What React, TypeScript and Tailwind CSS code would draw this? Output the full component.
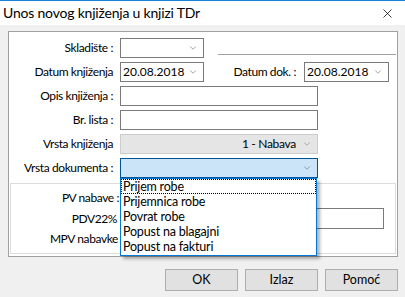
import { ChevronDown, X } from "lucide-react";

const font = "font-['Lato','Segoe_UI',sans-serif]";

const docTypes = [
  "Prijem robe",
  "Prijemnica robe",
  "Povrat robe",
  "Popust na blagajni",
  "Popust na fakturi",
];

function Label({ children }: { children: React.ReactNode }) {
  return (
    <span className="w-[104px] shrink-0 text-right text-[12px] tracking-[-0.4px] text-[#000]">
      {children}
    </span>
  );
}

function Combo({
  value,
  className = "",
}: {
  value?: string;
  className?: string;
}) {
  return (
    <div
      className={`flex h-[20px] items-center justify-between border border-[#7a7a7a] bg-white pl-[2px] pr-[5px] text-[12px] ${className}`}
    >
      <span>{value}</span>
      <ChevronDown size={10} strokeWidth={1.3} className="text-[#555]" />
    </div>
  );
}

function Input({ className = "" }: { className?: string }) {
  return (
    <div className={`h-[20px] border border-[#7a7a7a] bg-white ${className}`} />
  );
}

export default function App() {
  return (
    <div
      className={`${font} flex h-[297px] w-[405px] flex-col overflow-hidden border-t border-[#1883d7] bg-[#f0f0f0] text-black`}
    >
      {/* title bar */}
      <div className="flex h-[24px] shrink-0 items-center justify-between bg-white pl-[3px] pr-[10px]">
        <span className="text-[14px] leading-none tracking-[-0.2px]">
          Unos novog knjiženja u knjizi TDr
        </span>
        <X size={15} strokeWidth={1.2} />
      </div>

      <div className="px-[8px] pt-[6px]">
        <div className="relative flex h-[226px] w-[390px] flex-col border border-[#a0a0a0] bg-white pt-[6px]">
          <div className="flex flex-col gap-[4px]">
            <div className="flex items-center gap-[7px]">
              <Label>Skladište :</Label>
              <Combo className="w-[84px]" />
              <div className="ml-[7px] h-px w-[178px] translate-y-[6px] bg-[#a0a0a0]" />
            </div>
            <div className="flex items-center gap-[7px]">
              <Label>Datum knjiženja</Label>
              <Combo value="20.08.2018" className="w-[84px]" />
              <span className="ml-auto text-[12px] tracking-[-0.4px]">Datum dok. :</span>
              <Combo value="20.08.2018" className="mr-[8px] ml-[1px] w-[85px]" />
            </div>
            <div className="flex items-center gap-[7px]">
              <Label>Opis knjiženja :</Label>
              <Input className="w-[198px]" />
            </div>
            <div className="flex items-center gap-[7px]">
              <Label>Br. lista :</Label>
              <Input className="w-[198px]" />
            </div>
            <div className="flex items-center gap-[7px]">
              <Label>Vrsta knjiženja</Label>
              <div className="flex h-[20px] w-[198px] items-center justify-end gap-[6px] border border-[#cccccc] bg-[#e5e5e5] pr-[5px] text-[12px] tracking-[-0.3px]">
                <span>1 - Nabava</span>
                <ChevronDown size={10} strokeWidth={1.3} className="text-[#777]" />
              </div>
            </div>
            <div className="flex items-center gap-[7px]">
              <Label>Vrsta dokumenta :</Label>
              <div className="flex h-[20px] w-[198px] items-center justify-end border border-[#005499] bg-[#cce4f7] pr-[5px]">
                <ChevronDown size={10} strokeWidth={1.3} className="text-[#555]" />
              </div>
            </div>
          </div>

          {/* amounts */}
          <div className="mx-px mt-[5px] flex h-[71px] flex-col justify-between border border-[#dcdcdc] py-[4px] text-[12px] tracking-[-0.4px]">
            <div className="flex h-[20px] items-center">
              <span className="w-[108px] text-right">PV nabave :</span>
            </div>
            <div className="flex h-[21px] items-center">
              <span className="w-[106px] text-right">PDV22%</span>
              <div className="ml-auto mr-[11px] h-[21px] w-[200px] border border-[#7a7a7a]" />
            </div>
            <div className="flex h-[20px] items-center">
              <span className="w-[107px] text-right">MPV nabavke</span>
            </div>
          </div>

          {/* opened list */}
          <div className="absolute left-[111px] top-[146px] w-[197px] border border-[#0078d7] bg-white pb-px text-[12.5px] tracking-[-0.2px] shadow-[3px_3px_3px_rgba(0,0,0,0.3)]">
            {docTypes.map((t, i) => (
              <div
                key={t}
                className={`h-[15px] pl-[2px] leading-[15px] ${
                  i === 0 ? "outline-1 -outline-offset-1 outline-dotted outline-black" : ""
                }`}
              >
                {t}
              </div>
            ))}
          </div>
        </div>
      </div>

      <div className="mt-[12px] flex justify-end gap-[7px] pr-[7px]">
        {["OK", "Izlaz", "Pomoć"].map((b) => (
          <button
            key={b}
            className="h-[22px] w-[73px] border border-[#adadad] bg-[#e1e1e1] text-[12.5px]"
          >
            {b}
          </button>
        ))}
      </div>
    </div>
  );
}
